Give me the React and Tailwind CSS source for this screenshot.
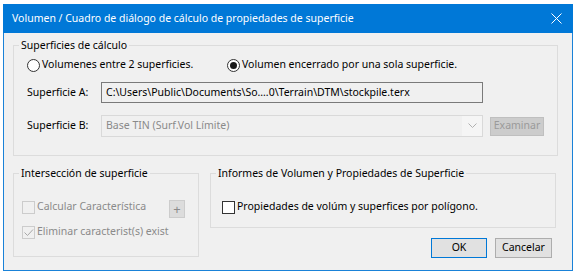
import { useState } from "react";

const font = { fontFamily: '"Noto Sans", "Open Sans", sans-serif' };

const Radio = ({ checked, label }) => (
  <div className="flex items-center gap-[2px]">
    <span className="w-[13px] h-[13px] rounded-full border border-[#333333] bg-white flex items-center justify-center">
      {checked && <span className="w-[7px] h-[7px] rounded-full bg-[#1a1a1a]" />}
    </span>
    <span>{label}</span>
  </div>
);

const Check = ({ checked, disabled, label, width }) => (
  <div className="flex items-center gap-[2px] h-[16px]">
    <span
      className={
        disabled
          ? "w-[13px] h-[13px] border border-[#cccccc] bg-[#f0f0f0] flex items-center justify-center shrink-0"
          : "w-[13px] h-[13px] border border-[#333333] bg-white flex items-center justify-center shrink-0"
      }
    >
      {checked && (
        <svg width="11" height="11" viewBox="0 0 11 11">
          <path d="M1.5 5.5 L4.5 8.5 L10 2.5" fill="none" stroke={disabled ? "#a8a8a8" : "#222"} strokeWidth="1" />
        </svg>
      )}
    </span>
    <span className={`${disabled ? "text-[#8a8a8a]" : ""} ${width || ""} overflow-hidden whitespace-nowrap`}>{label}</span>
  </div>
);

export default function App() {
  const [mode] = useState("single");
  return (
    <div className="w-[576px] h-[276px] bg-white pt-[4px] pl-[3px] text-[10.5px] text-black" style={font}>
      <div className="w-[570px] h-[267px] border border-[#1a82d8] bg-[#f0f0f0] flex flex-col">
        <div className="h-[29px] -mt-px -mx-px bg-[#0078d7] flex items-center justify-between pl-[9px] pr-[11px] text-white">
          <span>Volumen / Cuadro de diálogo de cálculo de propiedades de superficie</span>
          <svg width="11" height="11" viewBox="0 0 11 11">
            <path d="M0.5 0.5 L10.5 10.5 M10.5 0.5 L0.5 10.5" stroke="white" strokeWidth="1" />
          </svg>
        </div>

        <div className="pl-[9px] pr-[15px] pt-[4px]">
          <fieldset className="h-[119px] border border-[#dcdcdc] px-[13px]">
            <legend className="px-[2px] -ml-[8px] h-[16px] leading-[16px]">Superficies de cálculo</legend>
            <div className="flex items-center h-[16px] mt-[4px]">
              <div className="w-[200px]">
                <Radio checked={mode === "two"} label="Volumenes entre 2 superficies." />
              </div>
              <Radio checked={mode === "single"} label="Volumen encerrado por una sola superficie." />
            </div>
            <div className="flex items-center mt-[9px]">
              <span className="w-[74px]">Superficie A:</span>
              <div className="w-[382px] h-[21px] border border-[#7a7a7a] bg-[#f0f0f0] flex items-center pl-[4px]">
                C:\Users\Public\Documents\So….0\Terrain\DTM\stockpile.terx
              </div>
            </div>
            <div className="flex items-center mt-[12px]">
              <span className="w-[74px]">Superficie B:</span>
              <div className="w-[382px] h-[22px] border border-[#d9d9d9] bg-[#f5f5f5] flex items-center">
                <span className="flex-1 h-full flex items-center pl-[4px] text-[#8a8a8a] bg-[#f0f0f0]">Base TIN (Surf.Vol Límite)</span>
                <span className="w-[20px] h-full flex items-center justify-center">
                  <svg width="9" height="6" viewBox="0 0 9 6">
                    <path d="M0.5 0.5 L4.5 4.5 L8.5 0.5" fill="none" stroke="#b0b0b0" strokeWidth="1" />
                  </svg>
                </span>
              </div>
              <div className="ml-[7px] w-[54px] h-[19px] bg-[#cccccc] border border-[#bfbfbf] flex items-center justify-center text-[#9a9a9a]">
                Examinar
              </div>
            </div>
          </fieldset>

          <div className="flex mt-[9px]">
            <fieldset className="w-[186px] h-[92px] border border-[#dcdcdc] pl-[8px]">
              <legend className="px-[2px] -ml-[3px] h-[16px] leading-[16px]">Intersección de superficie</legend>
              <div className="flex items-start mt-[18px]">
                <Check disabled label="Calcular Característica" width="w-[110px]" />
                <span className="ml-[22px] mt-[1px] w-[16px] h-[18px] bg-[#dcdcdc] border border-[#cccccc] flex items-center justify-center text-[#8a8a8a] text-[13px] leading-none">
                  +
                </span>
              </div>
              <div className="mt-[6px]">
                <Check disabled checked label="Eliminar caracterist(s) exist" />
              </div>
            </fieldset>

            <div className="ml-[11px] flex flex-col items-end">
              <fieldset className="w-[346px] h-[63px] border border-[#dcdcdc] pl-[11px]">
                <legend className="px-[2px] -ml-[6px] h-[16px] leading-[16px]">Informes de Volumen y Propiedades de Superficie</legend>
                <div className="mt-[18px]">
                  <Check label="Propiedades de volúm y superfices por polígono." />
                </div>
              </fieldset>
              <div className="flex gap-[8px] mt-[10px] mr-[4px]">
                <div className="w-[56px] h-[20px] bg-[#e1e1e1] border border-[#0078d7] flex items-center justify-center">OK</div>
                <div className="w-[57px] h-[20px] bg-[#e1e1e1] border border-[#adadad] flex items-center justify-center">Cancelar</div>
              </div>
            </div>
          </div>
        </div>
      </div>
    </div>
  );
}
